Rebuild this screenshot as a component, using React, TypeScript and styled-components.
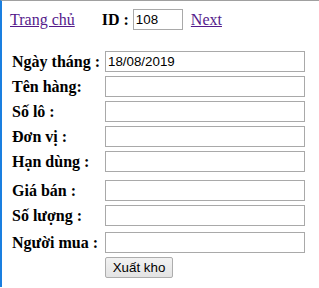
import React from 'react';
import styled, { createGlobalStyle } from 'styled-components';

const GlobalStyle = createGlobalStyle`
  html, body {
    margin: 0;
    background: #fff;
  }
  body {
    font-family: "Liberation Serif", "Times New Roman", serif;
    font-size: 16px;
    color: #000;
  }
`;

const Frame = styled.div`
  min-height: 287px;
  border-top: 1px solid #a0a0a0;
  border-left: 2px solid #1a7fe0;
  padding: 8px 0 0 8px;
  box-sizing: border-box;
`;

const TopBar = styled.div`
  display: flex;
  align-items: center;
  height: 21px;
`;

const Link = styled.a`
  color: #551a8b;
  text-decoration: underline;
  cursor: pointer;
`;

const IdLabel = styled.b`
  margin-left: 27px;
  margin-right: 4px;
`;

const TextInput = styled.input<{ $w: number }>`
  width: ${p => p.$w}px;
  height: 21px;
  box-sizing: border-box;
  border: 1px solid #a9a9a9;
  padding: 1px 2px;
  margin: 0;
  font-family: "Liberation Sans", Arial, sans-serif;
  font-size: 13.33px;
  color: #000;
  background: #fff;
  outline: none;
`;

const NextLink = styled(Link)`
  margin-left: 8px;
`;

const Form = styled.div`
  margin-top: 21px;
  padding-left: 2px;
  display: flex;
  flex-direction: column;
`;

const Row = styled.div<{ $extra?: number }>`
  display: grid;
  grid-template-columns: 93px 200px;
  align-items: center;
  margin-top: ${p => 4 + (p.$extra ?? 0)}px;
  &:first-child {
    margin-top: 0;
  }
`;

const Label = styled.label`
  font-weight: bold;
  white-space: nowrap;
`;

const SubmitButton = styled.button`
  grid-column: 2;
  justify-self: start;
  width: 68px;
  height: 21px;
  padding: 0;
  border: 1px solid #adadad;
  border-radius: 2px;
  background: linear-gradient(#f2f2f2, #e3e3e3);
  font-family: "Liberation Sans", Arial, sans-serif;
  font-size: 13.33px;
  color: #000;
`;

const fields: { label: string; value?: string; extra?: number }[] = [
  { label: 'Ngày tháng :', value: '18/08/2019' },
  { label: 'Tên hàng:' },
  { label: 'Số lô :' },
  { label: 'Đơn vị :' },
  { label: 'Hạn dùng :' },
  { label: 'Giá bán :', extra: 4 },
  { label: 'Số lượng :' },
  { label: 'Người mua :', extra: 2 },
];

export default function App() {
  return (
    <>
      <GlobalStyle />
      <Frame>
        <TopBar>
          <Link>Trang chủ</Link>
          <IdLabel>ID :</IdLabel>
          <TextInput $w={50} defaultValue="108" />
          <NextLink>Next</NextLink>
        </TopBar>
        <Form>
          {fields.map(f => (
            <Row key={f.label} $extra={f.extra}>
              <Label>{f.label}</Label>
              <TextInput $w={200} defaultValue={f.value ?? ''} />
            </Row>
          ))}
          <Row>
            <SubmitButton>Xuất kho</SubmitButton>
          </Row>
        </Form>
      </Frame>
    </>
  );
}
